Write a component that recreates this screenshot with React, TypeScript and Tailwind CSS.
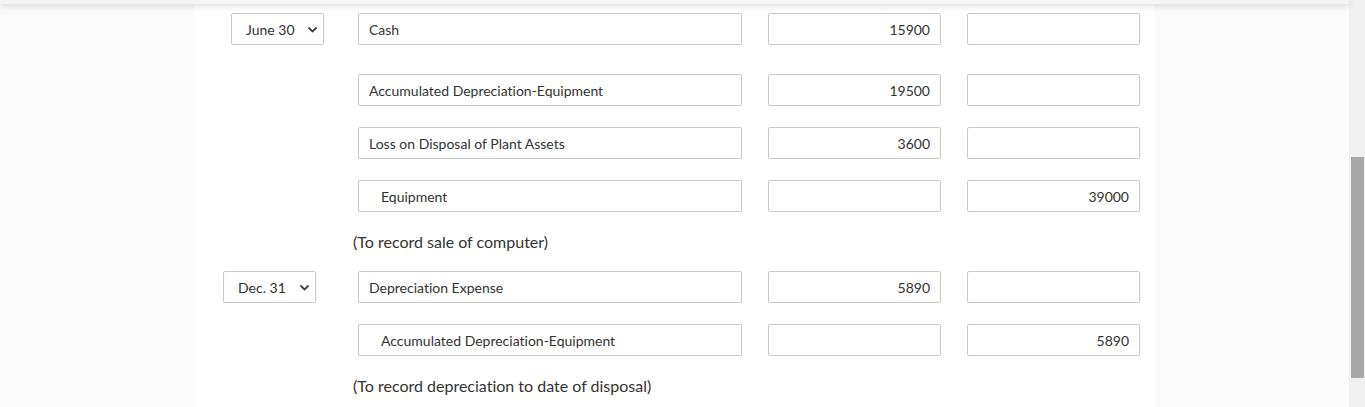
import React from 'react'

type Row = {
  date?: { label: string; offset: 'a' | 'b' }
  account: string
  credit?: boolean
  debit?: string
  creditAmt?: string
  gap: string
}

const font = { fontFamily: 'Lato, "Open Sans", sans-serif' }

function Chevron() {
  return (
    <svg width="9" height="6" viewBox="0 0 9 6" className="shrink-0">
      <path d="M1 1l3.5 3.5L8 1" fill="none" stroke="#444" strokeWidth="1.8" strokeLinecap="round" strokeLinejoin="round" />
    </svg>
  )
}

function DateSelect({ label, offset }: { label: string; offset: 'a' | 'b' }) {
  return (
    <div className={`${offset === 'a' ? 'ml-[36px]' : 'ml-[28px]'} w-[93px] h-[32px] border border-[#c9c9c9] rounded-[2px] bg-white flex items-center justify-between pl-[14px] pr-[6px] pt-[1px] text-[14px] text-[#333]`}>
      <span>{label}</span>
      <Chevron />
    </div>
  )
}

function Box({ children, width, align = 'left', indent = false }: { children?: React.ReactNode; width: string; align?: 'left' | 'right'; indent?: boolean }) {
  return (
    <div
      className={`${width} h-[32px] border border-[#c9c9c9] rounded-[2px] bg-white flex items-center pt-[1px] text-[14px] text-[#333] ${
        align === 'right' ? 'justify-end pr-[10px]' : indent ? 'pl-[22px]' : 'pl-[10px]'
      }`}
    >
      {children}
    </div>
  )
}

function EntryRow({ r }: { r: Row }) {
  return (
    <div className={`flex items-center ${r.gap}`}>
      <div className="w-[163px] flex items-center">
        {r.date && <DateSelect label={r.date.label} offset={r.date.offset} />}
      </div>
      <Box width="w-[384px]" indent={r.credit}>{r.account}</Box>
      <div className="ml-[26px]">
        <Box width="w-[173px]" align="right">{r.debit}</Box>
      </div>
      <div className="ml-[26px]">
        <Box width="w-[173px]" align="right">{r.creditAmt}</Box>
      </div>
    </div>
  )
}

function Caption({ text }: { text: string }) {
  return (
    <div className="pl-[158px] mt-[20px] mb-[19px] h-[20px] leading-[20px] text-[16px] text-[#333]">{text}</div>
  )
}

export default function App() {
  const first: Row[] = [
    { date: { label: 'June 30', offset: 'a' }, account: 'Cash', debit: '15900', gap: 'mb-[29px]' },
    { account: 'Accumulated Depreciation-Equipment', debit: '19500', gap: 'mb-[21px]' },
    { account: 'Loss on Disposal of Plant Assets', debit: '3600', gap: 'mb-[21px]' },
    { account: 'Equipment', credit: true, creditAmt: '39000', gap: '' },
  ]
  const second: Row[] = [
    { date: { label: 'Dec. 31', offset: 'b' }, account: 'Depreciation Expense', debit: '5890', gap: 'mb-[21px]' },
    { account: 'Accumulated Depreciation-Equipment', credit: true, creditAmt: '5890', gap: '' },
  ]

  return (
    <div className="w-[1365px] h-[407px] overflow-hidden bg-[#fafafa] flex [font-variant-ligatures:none]" style={font}>
      <div className="relative w-[1349px] h-full">
        {/* fixed header edge */}
        <div className="absolute top-0 left-0 right-0 h-[4px] bg-[#f4f4f4] shadow-[0_1px_6px_rgba(0,0,0,0.22)] z-10" />
        <div className="ml-[195px] w-[960px] h-full bg-white pt-[13px]">
          {first.map((r, i) => (
            <EntryRow key={i} r={r} />
          ))}
          <Caption text="(To record sale of computer)" />
          {second.map((r, i) => (
            <EntryRow key={i} r={r} />
          ))}
          <Caption text="(To record depreciation to date of disposal)" />
        </div>
      </div>
      {/* scrollbar */}
      <div className="w-[16px] h-full bg-[#f0f0f0] flex flex-col pl-[2px] pr-[1px]">
        <div className="h-[157px] shrink-0" />
        <div className="h-[221px] bg-[#a8a8a8]" />
      </div>
    </div>
  )
}
